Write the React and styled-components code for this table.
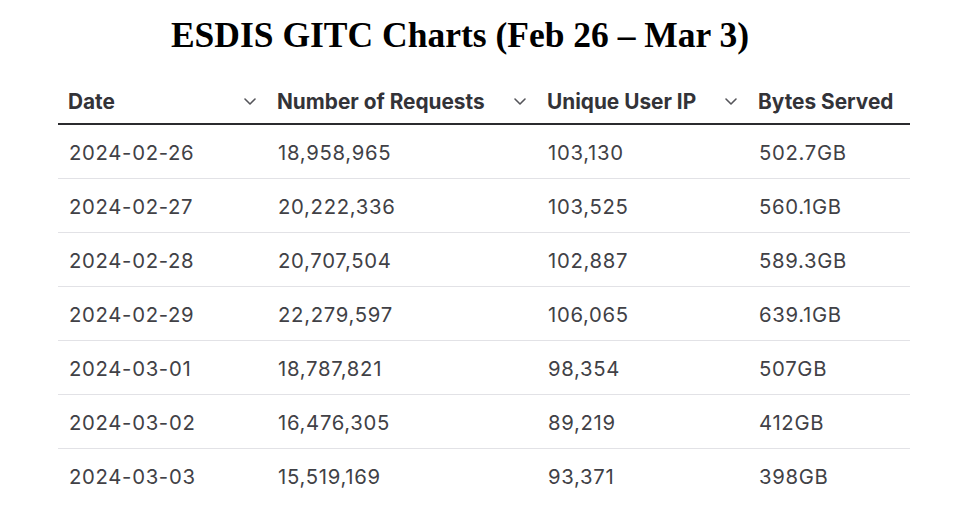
import React from 'react'
import styled, { createGlobalStyle } from 'styled-components'

const GlobalStyle = createGlobalStyle`
  body {
    margin: 0;
    background: #ffffff;
  }
`

const Page = styled.div`
  width: 972px;
  height: 524px;
  background: #fff;
  display: flex;
  flex-direction: column;
  align-items: center;
  overflow: hidden;
`

const Title = styled.h1`
  margin: 12px 52px 0 0;
  font-family: 'Liberation Serif', 'Times New Roman', serif;
  font-weight: 700;
  font-size: 35.5px;
  line-height: 46px;
  color: #000;
`

const Table = styled.div`
  width: 852px;
  margin: 22px 4px 0 0;
  display: grid;
  grid-template-columns: 209px 270px 211px 1fr;
  font-family: Inter, 'Noto Sans', sans-serif;
`

const HeadCell = styled.div`
  height: 43px;
  display: flex;
  align-items: center;
  justify-content: space-between;
  padding: 0 10px 0 10px;
  border-bottom: 2px solid #2b2b2e;
  font-size: 20.8px;
  font-weight: 700;
  color: #333338;
`

const Cell = styled.div`
  box-sizing: border-box;
  height: 54px;
  display: flex;
  align-items: center;
  padding: 1px 11px 0;
  border-bottom: ${p => (p.$last ? 'none' : '1px solid #e2e2e6')};
  box-shadow: ${p => (p.$first ? 'none' : 'inset 1px 0 0 #ffffff')};
  font-size: 20.3px;
  font-weight: 400;
  color: #414146;
  letter-spacing: 0.7px;
`

const Chevron = () => (
  <svg width="14" height="9" viewBox="0 0 14 9" fill="none">
    <path d="M2 2 L7 7 L12 2" stroke="#55555a" strokeWidth="1.6" strokeLinecap="round" strokeLinejoin="round" />
  </svg>
)

const columns = ['Date', 'Number of Requests', 'Unique User IP', 'Bytes Served']

const rows = [
  ['2024-02-26', '18,958,965', '103,130', '502.7GB'],
  ['2024-02-27', '20,222,336', '103,525', '560.1GB'],
  ['2024-02-28', '20,707,504', '102,887', '589.3GB'],
  ['2024-02-29', '22,279,597', '106,065', '639.1GB'],
  ['2024-03-01', '18,787,821', '98,354', '507GB'],
  ['2024-03-02', '16,476,305', '89,219', '412GB'],
  ['2024-03-03', '15,519,169', '93,371', '398GB'],
]

export default function App() {
  return (
    <Page>
      <GlobalStyle />
      <Title>ESDIS GITC Charts (Feb 26 – Mar 3)</Title>
      <Table>
        {columns.map((c, i) => (
          <HeadCell key={c}>
            <span>{c}</span>
            {i < columns.length - 1 && <Chevron />}
          </HeadCell>
        ))}
        {rows.map((r, ri) =>
          r.map((v, ci) => (
            <Cell key={ri + '-' + ci} $first={ci === 0} $last={ri === rows.length - 1}>
              {v}
            </Cell>
          ))
        )}
      </Table>
    </Page>
  )
}
